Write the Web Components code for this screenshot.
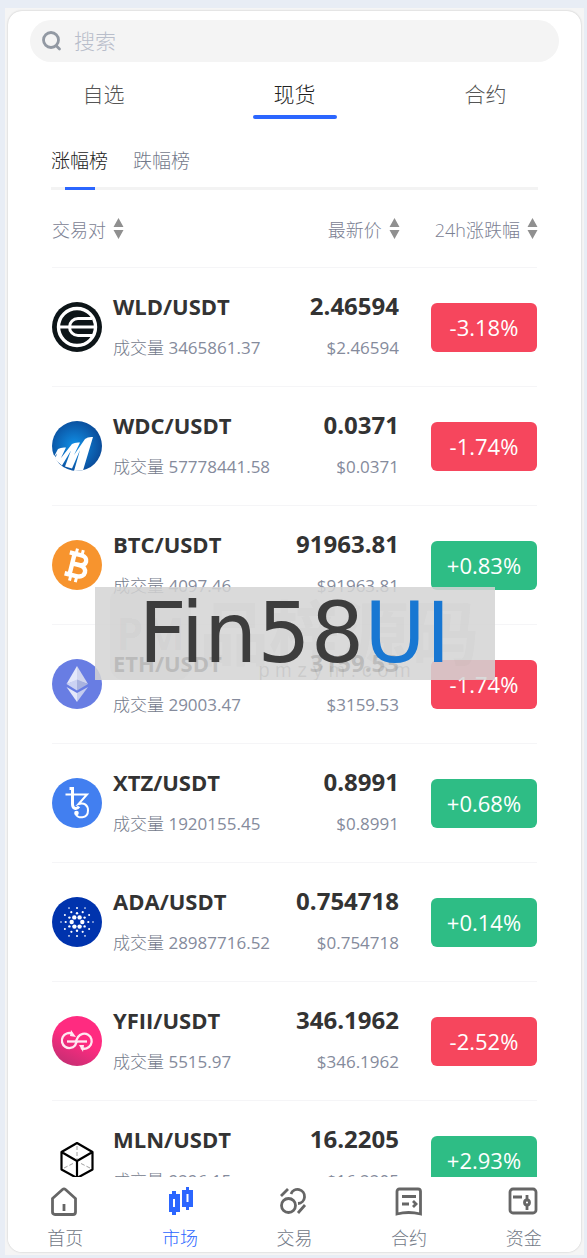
<!DOCTYPE html>
<html lang="zh-CN">
<head>
<meta charset="utf-8">
<meta name="viewport" content="width=device-width, initial-scale=1">
<title>市场</title>
<style>
    body {
        margin: 0;
        background: #e8edf5;
        color: #333;
        font-family: "Open Sans", "Noto Sans CJK SC", sans-serif;
    }
</style>
</head>
<body>
<market-app></market-app>

<script>
const COINS = {
    wld: `<circle cx="25" cy="25" r="25" fill="#0d1518"/>
        <circle cx="25" cy="25" r="18.500" fill="none" stroke="#fff" stroke-width="3.400"/>
        <path d="M7 25H42M40 16.500H26a8.500 8.500 0 0 0 0 17H40" fill="none" stroke="#fff" stroke-width="3"/>`,
    wdc: `<defs><radialGradient id="g" cx=".45" cy=".5" r=".6"><stop offset="0" stop-color="#1091e8"/><stop offset="1" stop-color="#0a4592"/></radialGradient></defs>
        <circle cx="25" cy="25" r="25" fill="url(#g)"/>
        <path d="M6 28q3-2 8-1.500L9 37l11-14q3-2 8-1.500L22 34l11-16q3-2.500 8-2L31 49.500l-9 .5 6-21-8 18.500-7-2 6-16-9 15-7-6 2-6-4 5z" fill="#fff"/>
        <path d="M0 33l4 3-1 5H0z" fill="#fff"/>`,
    btc: `<circle cx="25" cy="25" r="25" fill="#f7942e"/>
        <g transform="rotate(14 25 25)" fill="none" stroke="#fff"><path d="M15 14.500h12c8 0 8 10 0 10h-7M27 24.500c10 0 10 11.500 0 11.500H15M20 15v21" stroke-width="4.400"/><path d="M21.500 9v6M27.500 9v6M21.500 36v6M27.500 36v6" stroke-width="3"/></g>`,
    eth: `<circle cx="25" cy="25" r="25" fill="#687de3"/>
        <path d="M25 7v14.500L14.500 25z" fill="#e4e8fa"/><path d="M25 7l11 18-11-3.500z" fill="#d0d5ee"/>
        <path d="M14.500 25L25 20.500v11z" fill="#cbd2f3"/><path d="M36 25l-11-4.500v11z" fill="#a8b2df"/>
        <path d="M14.500 28L25 34v9z" fill="#e4e8fa"/><path d="M36 28l-11 6v9z" fill="#c4ccef"/>`,
    xtz: `<circle cx="25" cy="25" r="25" fill="#427ff0"/>
        <g fill="none" stroke="#fff"><path d="M13.500 16.500H35L26.500 26c6-2 9.500 1.500 9.500 6.500 0 8.500-11 8.500-12.500 3" stroke-width="2"/><path d="M17.500 10.500h3v15.500c0 5 4 6 6.500 2.500" stroke-width="3"/></g><circle cx="24.500" cy="35" r="2.300" fill="#fff"/>`,
    yfii: `<defs><linearGradient id="y" x1=".7" y1=".2" x2=".3" y2="1"><stop offset=".35" stop-color="#ff2b80"/><stop offset="1" stop-color="#c52e73"/></linearGradient></defs>
        <circle cx="25" cy="25" r="25" fill="url(#y)"/>
        <g fill="none" stroke="#ffe9f1" stroke-width="2.300"><path d="M20 17.500a7.500 7.500 0 1 0 3 12l2-4.500"/><path d="M29 32a7.500 7.500 0 1 0-3-11l-2 4"/><path d="M15 25.500h20"/></g>
        <path d="M18 20l1-6 5 7zM32 29l-1 7-4-7z" fill="#ffe9f1"/>`,
    mln: `<g fill="none" stroke="#000" stroke-width="2.200" stroke-linejoin="round"><path d="M25 43V26L9.500 17M25 26l15.500-9M25 43L9.500 34.500V17L25 8l15.500 9v17.500z"/><path d="M25 11v13M12 33l10-5M38 33l-10-5" stroke="#888" stroke-width=".8" stroke-dasharray="4 2"/></g>`
};

// Rings of dots around an empty centre: count, ring radius, dot radius, start angle
function adaDots() {
    let dots = '';
    [[6, 5.3, 2.2, 0], [6, 8.8, 1.2, 30], [6, 11.3, 1.1, 0], [6, 14, 1, 30], [6, 16, .8, 0]].forEach(([n, r, size, start]) => {
        for (let i = 0; i < n; i++) {
            const a = (start + i * 360 / n) * Math.PI / 180;
            dots += `<circle cx="${(25 + r * Math.cos(a)).toFixed(1)}" cy="${(25 + r * Math.sin(a)).toFixed(1)}" r="${size}"/>`;
        }
    });
    return dots;
}
COINS.ada = `<circle cx="25" cy="25" r="25" fill="#0033ad"/><g fill="#fff">${adaDots()}</g>`;

const NAV_ICONS = {
    home: '<path d="M1.500 11.500L11.500 2.500q1.500-1.200 3 0L24.500 11.500V25q0 2.500-2.500 2.500H4Q1.500 27.500 1.500 25z"/><path d="M13 17v7"/>',
    market: '<g fill="#2b66ff" stroke="none"><path d="M6 4h4v3h4v18h-4v3H6v-3H3V7h3zM20 0h3v3h4v17h-4v3h-3v-3h-4V3h4z"/></g><path d="M8 12v8M21.500 7v8" stroke="#fff" stroke-width="2"/>',
    trade: '<circle cx="8.500" cy="18.500" r="7"/><path d="M11 7a7 7 0 1 1 7 9.500M1 9l7-7M18 26l7-8"/>',
    contract: '<path d="M4.500 2H23q2.500 0 2.500 2.500V27q-12-3-23.500 0V4.500Q2 2 4.500 2z"/><path d="M7 9.500h14M7 17h7M18 14l3 3-3 3"/>',
    funds: '<rect x="0" y="2" width="26" height="24" rx="3"/><path d="M3 10h9M17 8v5M17 18v5"/><circle cx="17" cy="15.500" r="2.500"/>'
};

class SearchBox extends HTMLElement {
    constructor() {
        super();
        this.attachShadow({ mode: 'open' }).innerHTML = `
            <style>
                :host { display: block; margin: 0 22px; }
                label {
                    display: flex;
                    align-items: center;
                    gap: 12px;
                    height: 42px;
                    padding: 0 12px;
                    border-radius: 21px;
                    background: #f4f4f4;
                }
                svg { width: 20px; height: 20px; flex: none; }
                input {
                    flex: 1;
                    min-width: 0;
                    padding: 0;
                    border: 0;
                    outline: 0;
                    background: none;
                    color: #333;
                    font: inherit;
                    font-size: 21px;
                    font-weight: 300;
                }
                input::placeholder { color: #b8bdca; opacity: 1; }
            </style>
            <label>
                <svg viewBox="0 0 20 20" fill="none" stroke="#9299a3" stroke-width="2.800" stroke-linecap="round" aria-hidden="true"><circle cx="9" cy="9" r="7.500"/><path d="M14.500 15l3 3"/></svg>
                <input type="search" placeholder="搜索" aria-label="搜索">
            </label>
        `;
    }
}

class MainTab extends HTMLElement {
    constructor() {
        super();
        this.attachShadow({ mode: 'open' }).innerHTML = `
            <style>
                :host { display: flex; flex: 1; justify-content: center; }
                button {
                    width: 84px;
                    padding: 16px 0 0;
                    border: 0;
                    background: none;
                    color: #555;
                    font: inherit;
                    font-size: 21px;
                    font-weight: 300;
                    line-height: 32px;
                }
                button::after {
                    content: "";
                    display: block;
                    height: 4px;
                    margin-top: 5px;
                    border-radius: 2px;
                }
                :host([active]) button { color: #222; }
                :host([active]) button::after { background: #2b66ff; }
            </style>
            <button type="button"><slot></slot></button>
        `;
    }
}

class RankTab extends HTMLElement {
    constructor() {
        super();
        this.attachShadow({ mode: 'open' }).innerHTML = `
            <style>
                :host { display: block; }
                button {
                    display: block;
                    padding: 0;
                    border: 0;
                    background: none;
                    color: #737a8b;
                    font: inherit;
                    font-size: 19px;
                    font-weight: 300;
                    line-height: 30px;
                }
                /* The marker lies on the bottom border of the tab bar */
                button::after {
                    content: "";
                    display: block;
                    width: 30px;
                    height: 3px;
                    margin: 11px auto -3px;
                }
                :host([active]) button { color: #222; }
                :host([active]) button::after { background: #2b66ff; }
            </style>
            <button type="button"><slot></slot></button>
        `;
    }
}

class SortHeader extends HTMLElement {
    constructor() {
        super();
        this.attachShadow({ mode: 'open' }).innerHTML = `
            <style>
                :host { display: block; }
                button {
                    display: flex;
                    align-items: center;
                    gap: 7px;
                    padding: 0;
                    border: 0;
                    background: none;
                    color: #7b8193;
                    font: inherit;
                    font-size: 18px;
                    font-weight: 300;
                    white-space: nowrap;
                }
                svg { width: 11px; height: 21px; }
            </style>
            <button type="button"><slot></slot>
                <svg viewBox="0 0 11 21" fill="#909090" aria-hidden="true"><path d="M5.500 0L10.500 9H.5zM5.500 21l5-9H.5z"/></svg>
            </button>
        `;
    }
}

class MarketRow extends HTMLElement {
    constructor() {
        super();
        this.attachShadow({ mode: 'open' }).innerHTML = `
            <style>
                :host {
                    display: flex;
                    align-items: center;
                    height: 118px;
                    border-top: 1px solid #f5f5f7;
                }
                svg { flex: none; width: 50px; height: 50px; margin-right: 11px; }
                .info { flex: 1; }
                .price { text-align: right; margin-right: 32px; }
                .main, .sub { line-height: 42px; white-space: nowrap; }
                .main { font-size: 24px; font-weight: 700; }
                .pair { font-size: 22px; }
                .sub { color: #858b9c; font-size: 17px; }
                .label { color: #737a8b; font-weight: 300; }
                .change {
                    flex: none;
                    width: 106px;
                    border-radius: 6px;
                    background: #f6465d;
                    color: #fff;
                    font-size: 22px;
                    font-weight: 500;
                    line-height: 49px;
                    text-align: center;
                }
                .change.up { background: #2ebd85; }
            </style>
            <svg viewBox="0 0 50 50" aria-hidden="true"></svg>
            <div class="info">
                <div class="main pair"></div>
                <div class="sub"><span class="label">成交量</span> <span class="volume"></span></div>
            </div>
            <div class="price">
                <div class="main last"></div>
                <div class="sub usd"></div>
            </div>
            <div class="change"></div>
        `;
        const get = (name) => this.getAttribute(name);
        const find = (selector) => this.shadowRoot.querySelector(selector);
        find('svg').innerHTML = COINS[get('coin')];
        find('.pair').textContent = `${get('coin').toUpperCase()}/USDT`;
        find('.volume').textContent = get('volume');
        find('.last').textContent = get('price');
        find('.usd').textContent = `$${get('price')}`;
        find('.change').textContent = get('change');
        find('.change').classList.toggle('up', get('change').startsWith('+'));
    }
}

class NavItem extends HTMLElement {
    constructor() {
        super();
        this.attachShadow({ mode: 'open' }).innerHTML = `
            <style>
                :host { display: block; flex: 1; }
                a {
                    display: flex;
                    flex-direction: column;
                    align-items: center;
                    gap: 11px;
                    color: #6f7785;
                    font-size: 18px;
                    font-weight: 300;
                    line-height: 24px;
                    text-decoration: none;
                }
                :host([active]) a { color: #2b66ff; }
                svg { width: 28px; height: 28px; overflow: visible; }
            </style>
            <a href="#${this.getAttribute('icon')}">
                <svg viewBox="0 0 28 28" fill="none" stroke="#666" stroke-width="2.800" aria-hidden="true">${NAV_ICONS[this.getAttribute('icon')]}</svg>
                <slot></slot>
            </a>
        `;
    }
}

class WaterMark extends HTMLElement {
    constructor() {
        super();
        this.attachShadow({ mode: 'open' }).innerHTML = `
            <style>
                :host {
                    display: grid;
                    place-items: center;
                    width: 400px;
                    height: 93px;
                    overflow: hidden;
                    background: rgba(212, 212, 212, .86);
                    pointer-events: none;
                }
                .ghost, .site, .name { grid-area: 1 / 1; }
                .ghost {
                    display: flex;
                    align-items: center;
                    gap: 8px;
                    color: rgba(90, 90, 90, .03);
                    font-size: 70px;
                    font-weight: 700;
                    line-height: 93px;
                    white-space: nowrap;
                }
                .pm {
                    padding: 0 6px;
                    border-radius: 14px;
                    background: rgba(90, 90, 90, .02);
                    font-size: 44px;
                }
                .site {
                    align-self: end;
                    padding-left: 80px;
                    color: rgba(90, 90, 90, .12);
                    font: 20px/20px "Liberation Sans", sans-serif;
                }
                .name {
                    color: #3d3d3d;
                    font: 84px/93px "DejaVu Sans", sans-serif;
                }
                b { color: #1877d2; font-weight: 400; }
            </style>
            <div class="ghost"><span class="pm">PM</span><span>品梓源码</span></div>
            <div class="site">p m z y m . c o m</div>
            <div class="name">Fin58<b>UI</b></div>
        `;
    }
}

class MarketApp extends HTMLElement {
    constructor() {
        super();
        this.attachShadow({ mode: 'open' }).innerHTML = `
            <style>
                :host {
                    display: flex;
                    box-sizing: border-box;
                    height: 100vh;
                    padding: 8px 3px 3px 5px;
                }
                .frame { display: flex; flex: 1; min-width: 0; padding: 3px; background: #f5f5f5; }
                .card {
                    position: relative;
                    display: flex;
                    flex: 1;
                    flex-direction: column;
                    min-width: 0;
                    overflow: hidden;
                    padding-top: 9px;
                    border-radius: 14px;
                    background: #fff;
                    box-shadow: 0 0 2px #bbb;
                }
                .tabs { display: flex; }
                .ranks {
                    display: flex;
                    gap: 25px;
                    margin: 0 43px;
                    padding-top: 27px;
                    border-bottom: 3px solid #f3f3f3;
                }
                .head {
                    display: flex;
                    align-items: center;
                    height: 77px;
                    margin: 0 43px 0 44px;
                }
                .head > :first-child { flex: 1; }
                .head > :last-child { margin-left: 35px; }
                .list { flex: 1; min-height: 0; overflow: hidden; padding: 0 44px; }
                nav { display: flex; height: 65px; padding-top: 10px; background: #fff; }
                water-mark {
                    position: absolute;
                    top: 50%;
                    left: 50%;
                    transform: translate(-50%, -45px);
                }
            </style>
            <div class="frame">
                <main class="card">
                    <search-box></search-box>
                    <div class="tabs">
                        <main-tab>自选</main-tab>
                        <main-tab active>现货</main-tab>
                        <main-tab>合约</main-tab>
                    </div>
                    <div class="ranks">
                        <rank-tab active>涨幅榜</rank-tab>
                        <rank-tab>跌幅榜</rank-tab>
                    </div>
                    <div class="head">
                        <sort-header>交易对</sort-header>
                        <sort-header>最新价</sort-header>
                        <sort-header>24h涨跌幅</sort-header>
                    </div>
                    <div class="list">
                        <market-row coin="wld" volume="3465861.37" price="2.46594" change="-3.18%"></market-row>
                        <market-row coin="wdc" volume="57778441.58" price="0.0371" change="-1.74%"></market-row>
                        <market-row coin="btc" volume="4097.46" price="91963.81" change="+0.83%"></market-row>
                        <market-row coin="eth" volume="29003.47" price="3159.53" change="-1.74%"></market-row>
                        <market-row coin="xtz" volume="1920155.45" price="0.8991" change="+0.68%"></market-row>
                        <market-row coin="ada" volume="28987716.52" price="0.754718" change="+0.14%"></market-row>
                        <market-row coin="yfii" volume="5515.97" price="346.1962" change="-2.52%"></market-row>
                        <market-row coin="mln" volume="9296.15" price="16.2205" change="+2.93%"></market-row>
                    </div>
                    <nav>
                        <nav-item icon="home">首页</nav-item>
                        <nav-item icon="market" active>市场</nav-item>
                        <nav-item icon="trade">交易</nav-item>
                        <nav-item icon="contract">合约</nav-item>
                        <nav-item icon="funds">资金</nav-item>
                    </nav>
                    <water-mark></water-mark>
                </main>
            </div>
        `;
    }
}

customElements.define('search-box', SearchBox);
customElements.define('main-tab', MainTab);
customElements.define('rank-tab', RankTab);
customElements.define('sort-header', SortHeader);
customElements.define('market-row', MarketRow);
customElements.define('nav-item', NavItem);
customElements.define('water-mark', WaterMark);
customElements.define('market-app', MarketApp);
</script>
</body>
</html>
